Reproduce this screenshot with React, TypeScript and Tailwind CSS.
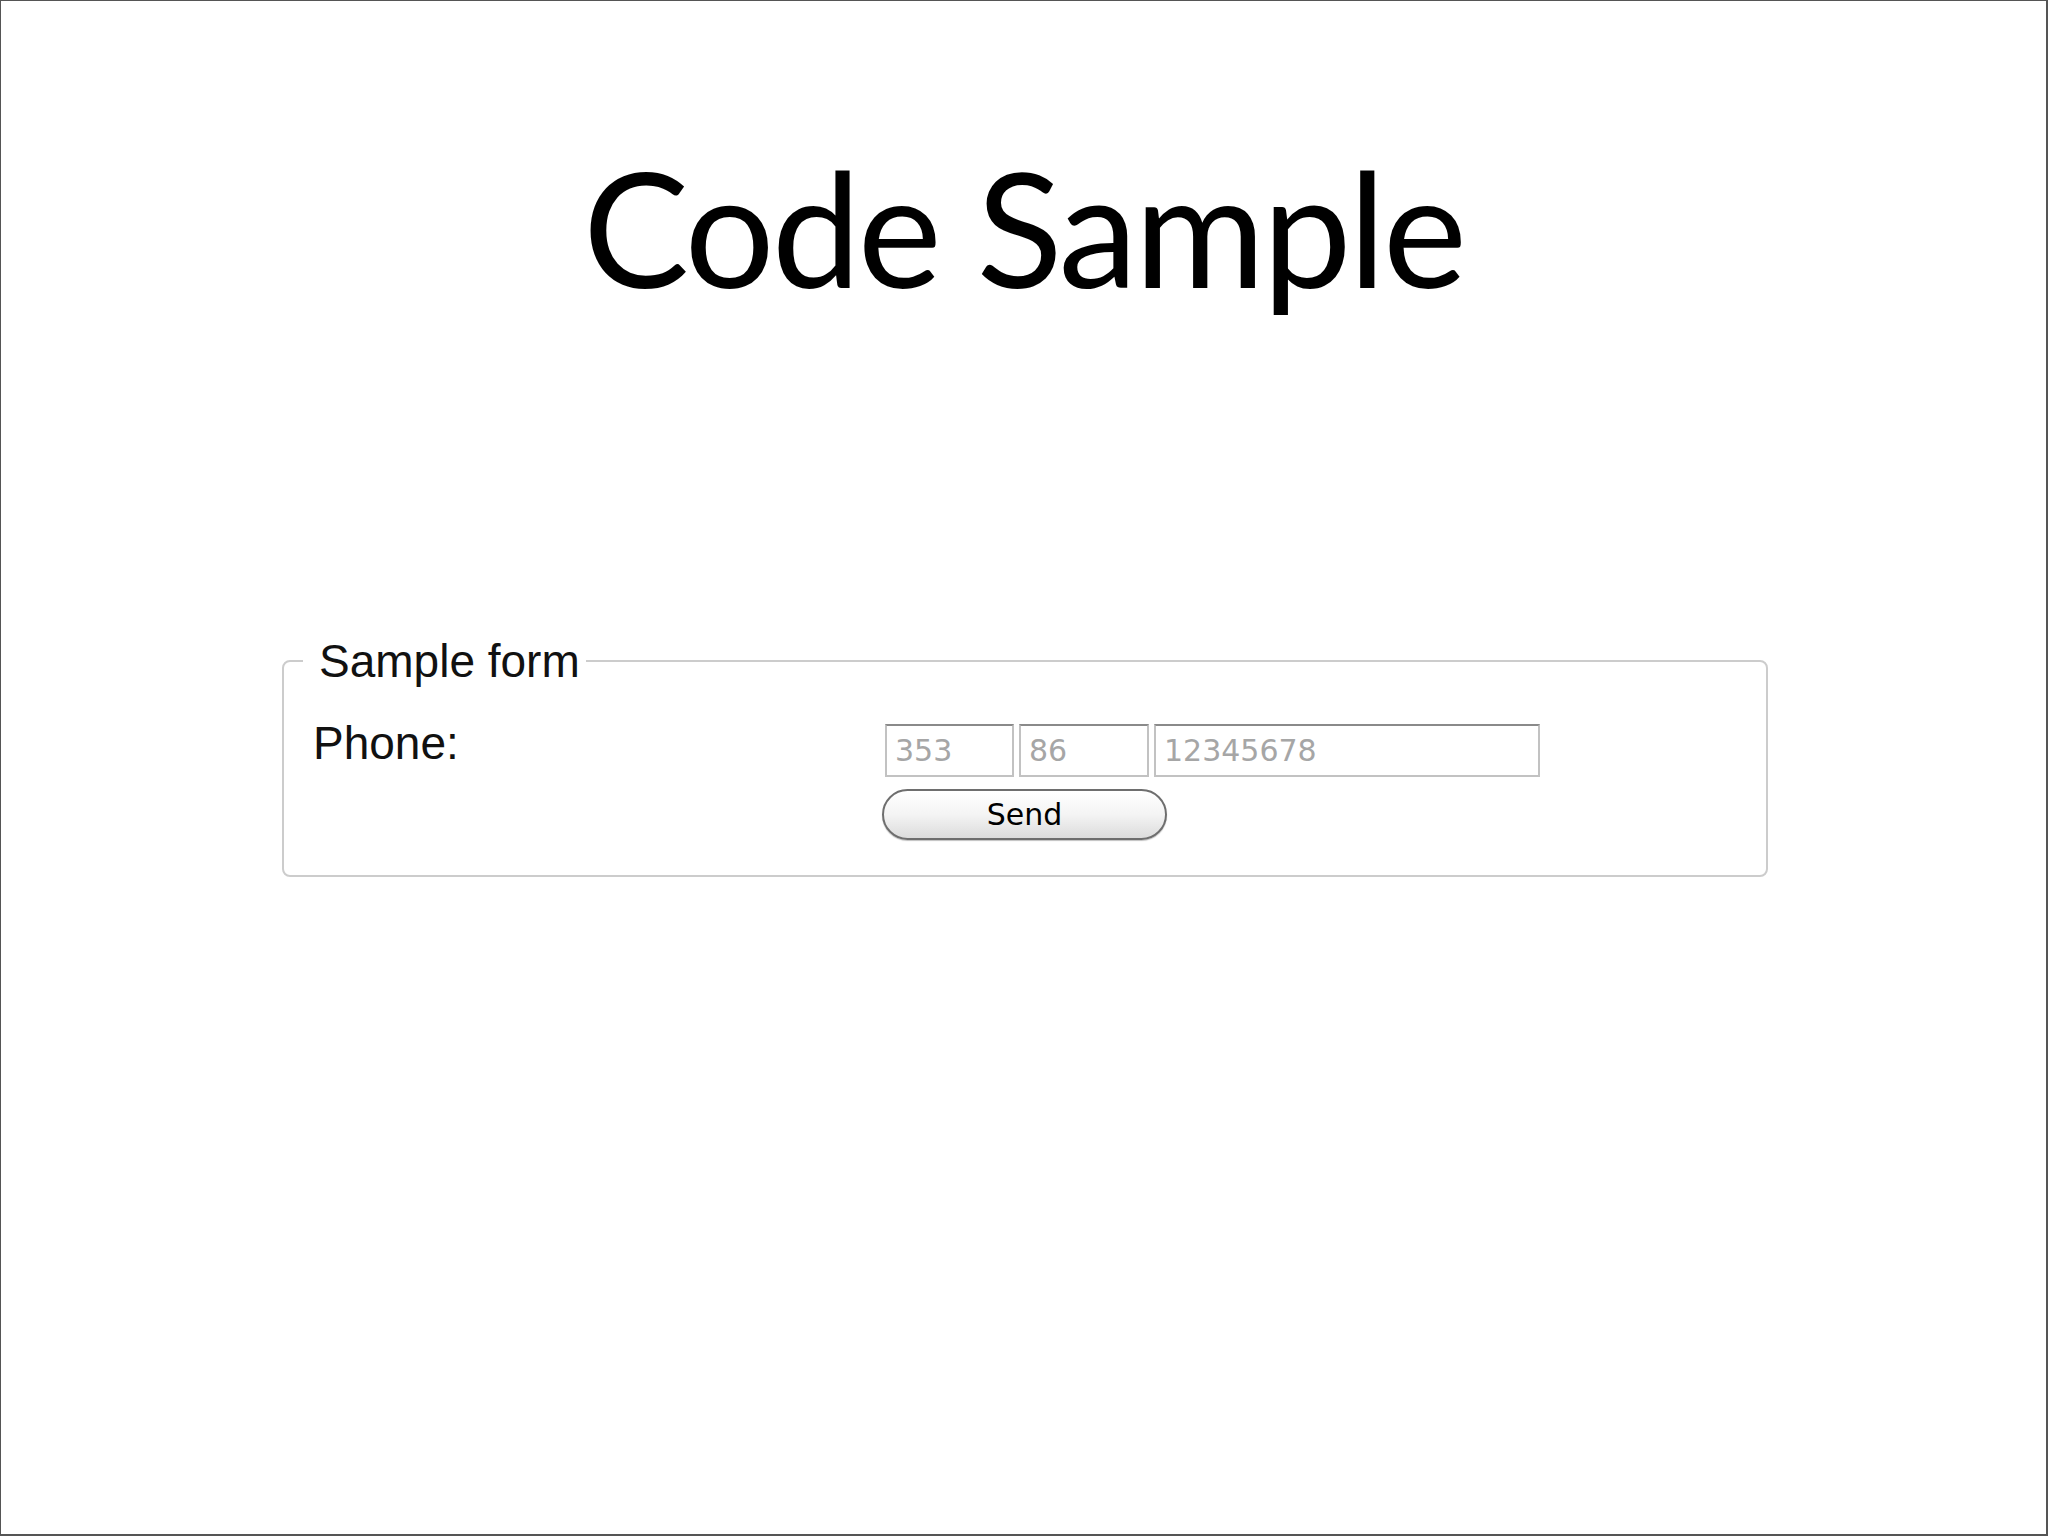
export default function App() {
  return (
    <div className="w-[2048px] h-[1536px] bg-white border-t border-l border-r-2 border-b-2 border-[#555555] flex flex-col">
      <h1 className="pt-[146px] text-center text-[159px] tracking-[-3px] leading-none text-black font-normal" style={{ fontFamily: 'Lato, sans-serif' }}>
        Code Sample
      </h1>

      <fieldset
        className="mt-[329px] ml-[281px] w-[1486px] h-[242px] border-2 border-[#cccccc] rounded-[8px] pl-[29px] pr-4 pb-4"
        style={{ fontFamily: '"Liberation Sans", Arial, sans-serif' }}
      >
        <legend className="-ml-[10px] pl-[16px] pr-[6px] text-[46px] leading-[52px] text-[#111]">Sample form</legend>
        <div className="flex mt-[30px]">
          <label className="w-[572px] text-[46px] leading-[52px] text-[#111]">Phone:</label>
          <div className="flex flex-col gap-[12px] pt-[7px]">
            <div className="flex gap-[5px]">
              <input
                readOnly
                value="353"
                className="w-[129px] h-[53px] border-2 border-[#c2c2c2] border-t-[#8a8a8a] bg-white px-[8px] text-[30px] text-[#a6a6a6] outline-none"
                style={{ fontFamily: '"DejaVu Sans", sans-serif' }}
              />
              <input
                readOnly
                value="86"
                className="w-[130px] h-[53px] border-2 border-[#c2c2c2] border-t-[#8a8a8a] bg-white px-[8px] text-[30px] text-[#a6a6a6] outline-none"
                style={{ fontFamily: '"DejaVu Sans", sans-serif' }}
              />
              <input
                readOnly
                value="12345678"
                className="w-[386px] h-[53px] border-2 border-[#c2c2c2] border-t-[#8a8a8a] bg-white px-[8px] text-[30px] text-[#a6a6a6] outline-none"
                style={{ fontFamily: '"DejaVu Sans", sans-serif' }}
              />
            </div>
            <button
              className="w-[285px] h-[51px] -ml-[3px] rounded-full border-2 border-[#6e6e6e] bg-gradient-to-b from-white via-[#f4f4f4] to-[#dcdcdc] text-[30px] text-black shadow-[0_1px_1px_rgba(0,0,0,0.25)]"
              style={{ fontFamily: '"DejaVu Sans", sans-serif' }}
            >
              Send
            </button>
          </div>
        </div>
      </fieldset>
    </div>
  );
}
